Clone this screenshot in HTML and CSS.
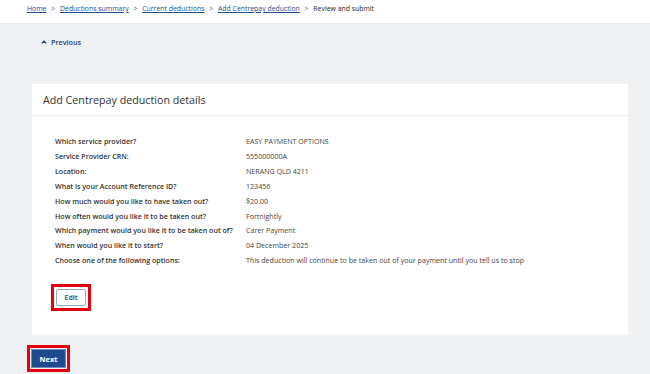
FILE: index.html
```html
<!DOCTYPE html>
<html lang="en">
<head>
    <meta charset="UTF-8">
    <meta name="viewport" content="width=device-width, initial-scale=1.0">
    <title>Review and submit</title>
    <link rel="stylesheet" href="styles.css">
</head>
<body>
    <nav class="breadcrumb">
        <a href="#">Home</a>
        <span class="sep">&gt;</span>
        <a href="#">Deductions summary</a>
        <span class="sep">&gt;</span>
        <a href="#">Current deductions</a>
        <span class="sep">&gt;</span>
        <a href="#">Add Centrepay deduction</a>
        <span class="sep">&gt;</span>
        <span class="current">Review and submit</span>
    </nav>

    <main class="page">
        <a class="previous" href="#">
            <svg width="6" height="4" viewBox="0 0 6 4"><path d="M0.8 3.4 L3 1.2 L5.2 3.4" fill="none" stroke="#1d3f73" stroke-width="1.3"/></svg>
            Previous
        </a>

        <section class="card">
            <h2 class="card-title">Add Centrepay deduction details</h2>
            <div class="card-body">
                <dl class="details">
                    <dt>Which service provider?</dt><dd>EASY PAYMENT OPTIONS</dd>
                    <dt>Service Provider CRN:</dt><dd>555000000A</dd>
                    <dt>Location:</dt><dd>NERANG QLD 4211</dd>
                    <dt>What is your Account Reference ID?</dt><dd>123456</dd>
                    <dt>How much would you like to have taken out?</dt><dd>$20.00</dd>
                    <dt>How often would you like it to be taken out?</dt><dd>Fortnightly</dd>
                    <dt>Which payment would you like it to be taken out of?</dt><dd>Carer Payment</dd>
                    <dt>When would you like it to start?</dt><dd>04 December 2025</dd>
                    <dt>Choose one of the following options:</dt><dd>This deduction will continue to be taken out of your payment until you tell us to stop</dd>
                </dl>
                <span class="highlight edit-wrap"><button class="btn-edit" type="button">Edit</button></span>
            </div>
        </section>

        <span class="highlight next-wrap"><button class="btn-next" type="button">Next</button></span>
    </main>
</body>
</html>
```

FILE: styles.css
```css
body {
    font-family: 'Open Sans', 'Noto Sans', sans-serif;
    background-color: #f0f1f3;
    margin: 0;
    padding: 0;
    color: #333;
}

.breadcrumb {
    background-color: #ffffff;
    height: 24px;
    padding: 4px 0 0 27px;
    box-sizing: border-box;
    font-size: 6.9px;
    border-bottom: 1px solid #e8e9eb;
}

.breadcrumb a {
    color: #1d4f91;
}

.breadcrumb .sep {
    color: #555;
    margin: 0 3px;
}

.breadcrumb .current {
    color: #222;
}

.page {
    padding: 3px 22px 0 32px;
}

.previous {
    display: inline-flex;
    align-items: center;
    gap: 4px;
    margin-left: 9px;
    color: #1d3f73;
    font-size: 7.2px;
    font-weight: 600;
    text-decoration: none;
}

.card {
    background-color: #ffffff;
    margin-top: 35px;
    height: 251px;
}

.card-title {
    margin: 0;
    height: 31px;
    line-height: 33px;
    padding-left: 11px;
    font-size: 10.7px;
    font-weight: 400;
    color: #333;
    border-bottom: 1px solid #ececec;
}

.card-body {
    padding: 18px 0 0 23px;
}

.details {
    display: grid;
    grid-template-columns: 191px 1fr;
    margin: 0;
    font-size: 7.1px;
    line-height: 14.9px;
}

.details dt {
    font-weight: 600;
    color: #333;
}

.details dd {
    margin: 0;
    color: #444;
}

.highlight {
    display: inline-block;
    border: 3px solid #e3000f;
}

.edit-wrap {
    margin: 16px 0 0 -4px;
    padding: 2px;
}

.btn-edit {
    display: block;
    width: 30px;
    height: 17px;
    padding: 0;
    background-color: #ffffff;
    border: 1.5px solid #94a9c9;
    border-radius: 2px;
    color: #1d3f73;
    font-family: inherit;
    font-size: 7px;
    font-weight: 600;
}

.next-wrap {
    margin: 10px 0 0 -5px;
    padding: 1px;
}

.btn-next {
    display: block;
    width: 35px;
    height: 19px;
    padding: 0;
    background-color: #1f4b8e;
    border: none;
    box-shadow: inset 0 0 0 1px #6f8fbf;
    color: #ffffff;
    font-family: inherit;
    font-size: 7.4px;
    font-weight: 700;
}
```
